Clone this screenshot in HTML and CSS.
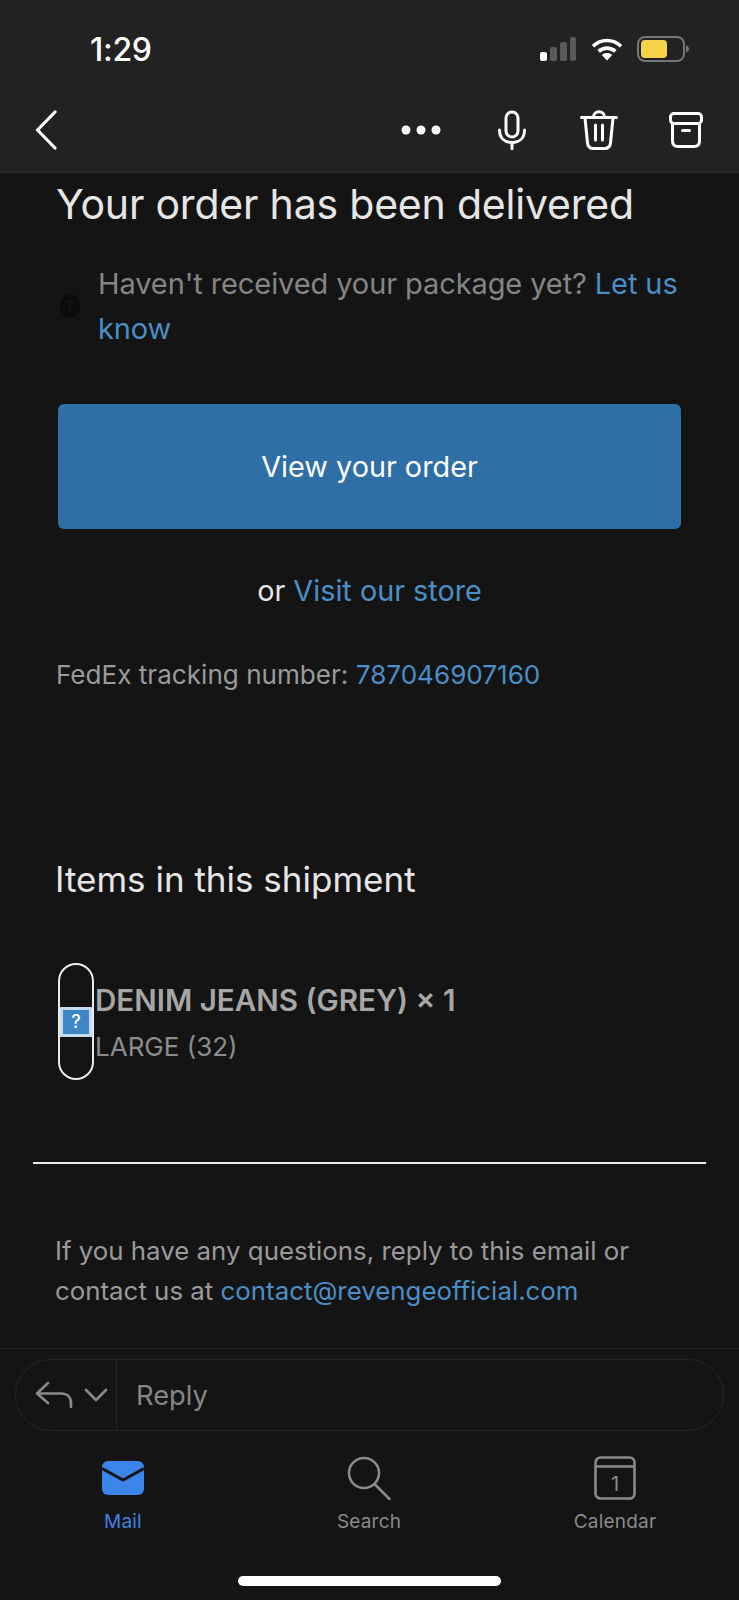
FILE: index.html
```html
<!DOCTYPE html>
<html lang="en">
<head>
<meta charset="utf-8">
<title>Your order has been delivered</title>
<link rel="stylesheet" href="styles.css">
</head>
<body>
<div class="screen">
  <header class="top">
    <div class="status">
      <span class="time">1:29</span>
      <div class="status-icons">
        <svg class="signal" width="38" height="26" viewBox="0 0 38 26">
          <rect x="1" y="16" width="7" height="9" rx="2" fill="#fff"/>
          <rect x="11" y="11" width="7" height="14" rx="2" fill="#5a5a5a"/>
          <rect x="21" y="6" width="7" height="19" rx="2" fill="#5a5a5a"/>
          <rect x="31" y="1" width="6" height="24" rx="2" fill="#5a5a5a"/>
        </svg>
        <svg class="wifi" width="32" height="24" viewBox="0 0 32 24">
          <path d="M2 9.2C10 1.6 22 1.6 30 9.2" fill="none" stroke="#fff" stroke-width="3.6"/>
          <path d="M7.6 14.4C12.6 10 19.4 10 24.4 14.4" fill="none" stroke="#fff" stroke-width="3.6"/>
          <path d="M10.8 18 16 23.6 21.2 18C18 15.4 14 15.4 10.8 18Z" fill="#fff"/>
        </svg>
        <svg class="battery" width="52" height="26" viewBox="0 0 52 26">
          <rect x="1" y="1" width="46" height="24" rx="7" fill="none" stroke="#777" stroke-width="2"/>
          <rect x="4" y="4" width="26" height="18" rx="4" fill="#f6d247"/>
          <path d="M49 9.5c2 .6 3 2 3 3.5s-1 2.900-3 3.500Z" fill="#777"/>
        </svg>
      </div>
    </div>
    <nav class="toolbar">
      <svg class="back" width="22" height="40" viewBox="0 0 22 40"><path d="M20 2 2.500 20 20 38" fill="none" stroke="#fff" stroke-width="3.200" stroke-linecap="round" stroke-linejoin="round"/></svg>
      <div class="actions">
        <svg class="more" width="40" height="10" viewBox="0 0 40 10"><circle cx="5" cy="5" r="4.500" fill="#fff"/><circle cx="20" cy="5" r="4.500" fill="#fff"/><circle cx="35" cy="5" r="4.500" fill="#fff"/></svg>
        <svg class="mic" width="30" height="40" viewBox="0 0 30 40" fill="none" stroke="#fff" stroke-width="3" stroke-linecap="round"><rect x="9" y="2" width="12" height="25" rx="6"/><path d="M2.500 20c0 8 5 12.500 12.500 12.500S27.500 28 27.500 20M15 32.500V39"/></svg>
        <svg class="trash" width="38" height="40" viewBox="0 0 38 40" fill="none" stroke="#fff" stroke-width="3" stroke-linecap="round" stroke-linejoin="round"><path d="M1.500 7.500h35M5 8l2.500 25c.3 3.500 2.500 5.500 6 5.500h11c3.500 0 5.700-2 6-5.500L33 8M13.500 7c0-7 11-7 11 0M15.500 15v15M22.500 15v15"/></svg>
        <svg class="box" width="34" height="36" viewBox="0 0 34 36" fill="none" stroke="#fff" stroke-width="3" stroke-linejoin="round" stroke-linecap="round"><rect x="1.500" y="1.500" width="31" height="10" rx="3.500"/><path d="M3.500 11.500V29c0 3.500 2 5.500 5.500 5.500h16c3.500 0 5.500-2 5.500-5.500V11.500M13.500 18.500h7"/></svg>
      </div>
    </nav>
  </header>

  <main class="mail">
    <h1 class="title">Your order has been delivered</h1>
    <div class="notice">
      <span class="notice-icon">?</span>
      <p class="notice-text">Haven't received your package yet? <a class="link">Let us</a> <a class="link">know</a></p>
    </div>
    <a class="cta">View your order</a>
    <p class="store">or <a class="link">Visit our store</a></p>
    <p class="tracking">FedEx tracking number: <a class="link">787046907160</a></p>
    <h2 class="items-head">Items in this shipment</h2>
    <div class="item">
      <div class="thumb"><span class="broken">?</span></div>
      <div class="item-text">
        <div class="item-name">DENIM JEANS (GREY) × 1</div>
        <div class="item-variant">LARGE (32)</div>
      </div>
    </div>
    <hr class="rule">
    <div class="contact">
      <p class="contact-line">If you have any questions, reply to this email or</p>
      <p class="contact-line">contact us at <a class="link">contact@revengeofficial.com</a></p>
    </div>
  </main>

  <footer class="bottom">
    <div class="reply-wrap">
      <div class="reply">
        <div class="reply-actions">
          <svg width="38" height="28" viewBox="0 0 38 28" fill="none" stroke="#8a8a8a" stroke-width="2.600" stroke-linecap="round" stroke-linejoin="round"><path d="M13 2 2 12.500 13 22M2 12.500h24c6 0 10 3.500 10 9.500v4"/></svg>
          <svg width="24" height="14" viewBox="0 0 24 14" fill="none" stroke="#8a8a8a" stroke-width="2.600" stroke-linecap="round" stroke-linejoin="round"><path d="m2 2 10 10L22 2"/></svg>
        </div>
        <span class="reply-label">Reply</span>
      </div>
    </div>
    <div class="tabs">
      <div class="tab tab-active">
        <div class="tab-icon"><svg width="44" height="36" viewBox="0 0 44 36"><rect x="1" y="1" width="42" height="34" rx="6" fill="#3a84ea"/><path d="M1 8.500 22 20 43 8.500" fill="none" stroke="#141414" stroke-width="3"/></svg></div>
        <span class="tab-label">Mail</span>
      </div>
      <div class="tab">
        <div class="tab-icon"><svg width="44" height="44" viewBox="0 0 44 44" fill="none" stroke="#8a8a8a" stroke-width="2.600" stroke-linecap="round"><circle cx="17" cy="17" r="15"/><path d="m27.500 28 15 15"/></svg></div>
        <span class="tab-label">Search</span>
      </div>
      <div class="tab">
        <div class="tab-icon"><svg width="42" height="44" viewBox="0 0 42 44" fill="none" stroke="#8a8a8a" stroke-width="2.600"><rect x="1.500" y="1.500" width="39" height="41" rx="5"/><path d="M1.500 10.500h39"/><text x="21" y="35" class="cal-num">1</text></svg></div>
        <span class="tab-label">Calendar</span>
      </div>
    </div>
    <div class="home-row"><div class="home"></div></div>
  </footer>
</div>
</body>
</html>
```
FILE: styles.css
```css
* { box-sizing: border-box; }
html, body { margin: 0; padding: 0; background: #141414; }
body { font-family: Inter, "Liberation Sans", sans-serif; }
p, h1, h2 { margin: 0; font-weight: 400; }

.screen { width: 739px; height: 1600px; display: flex; flex-direction: column; overflow: hidden; background: #141414; }

.top { height: 173px; flex: none; background: #222222; border-bottom: 1px solid #2a2a2a; }
.status { height: 90px; display: flex; justify-content: space-between; align-items: flex-start; padding: 30px 50px 0 90px; }
.time { font-size: 32px; line-height: 40px; font-weight: 500; color: #fff; letter-spacing: -0.3px; }
.status-icons { display: flex; align-items: center; gap: 14px; padding-top: 6px; }
.toolbar { display: flex; justify-content: space-between; align-items: center; padding: 0 36px 0 35px; height: 80px; }
.actions { display: flex; align-items: center; }
.more { margin-right: 56px; }
.mic { margin-right: 53px; }
.trash { margin-right: 51px; }

.mail { flex: 1; min-height: 0; padding: 0 33px; color: #e6e6e6; }
.title { font-size: 41px; line-height: 60px; letter-spacing: -0.2px; color: #e6e6e6; padding-left: 23px; margin-top: 1px; white-space: nowrap; }
.notice { display: flex; align-items: center; gap: 18px; margin: 27px 0 0 27px; }
.notice-icon { flex: none; width: 20px; height: 24px; border-radius: 50%; background: #0b0b0b; color: #1c1c1c; font-size: 14px; line-height: 24px; text-align: center; }
.notice-text { font-size: 29px; line-height: 45px; letter-spacing: -0.1px; color: #858585; width: 600px; }
.link { color: #4a8fc6; }
.cta { display: flex; align-items: center; justify-content: center; width: 623px; height: 125px; margin: 53px 0 0 25px; background: #306fa5; border-radius: 6px; color: #fff; font-size: 28.8px; }
.store { font-size: 28.8px; line-height: 40px; color: #e6e6e6; text-align: center; margin-top: 42px; }
.tracking { font-size: 26.100px; line-height: 40px; color: #9a9a9a; margin: 44px 0 0 23px; white-space: nowrap; }
.items-head { font-size: 35px; line-height: 50px; color: #e6e6e6; margin: 159px 0 0 22px; }
.item { display: flex; align-items: center; margin: 59px 0 0 25px; }
.thumb { flex: none; width: 36px; height: 117px; border: 2px solid #ececec; border-radius: 18px; display: flex; align-items: center; justify-content: center; }
.broken { display: block; width: 32px; height: 30px; flex: none; background: #3f86c8; border: 3px solid #c6dcee; color: #fff; font-size: 18px; font-weight: 500; line-height: 24px; text-align: center; }
.item-text { margin: 3px 0 0 1px; }
.item-name { font-size: 29.6px; line-height: 46px; font-weight: 600; color: #a6a6a6; white-space: nowrap; }
.item-variant { font-size: 26px; line-height: 46px; margin-top: 1px; color: #8c8c8c; white-space: nowrap; }
.rule { border: 0; height: 2px; background: #ececec; margin: 82px 0 0 0; width: 673px; }
.contact { margin: 67px 0 0 22px; }
.contact-line { font-size: 25.85px; line-height: 40px; color: #9a9a9a; white-space: nowrap; }

.bottom { flex: none; height: 252px; background: #141414; border-top: 1px solid #222; }
.reply-wrap { padding: 10px 15px 0; }
.reply { height: 72px; border: 1px solid #262626; border-radius: 36px; display: flex; align-items: center; }
.reply-actions { width: 101px; height: 100%; flex: none; display: flex; align-items: center; gap: 11px; padding-left: 19px; border-right: 1px solid #262626; }
.reply-label { font-size: 27.3px; color: #858585; margin-left: 19px; }
.tabs { display: flex; justify-content: flex-start; margin-top: 25px; }
.tab { width: 246px; height: 78px; display: flex; flex-direction: column; align-items: center; justify-content: space-between; }
.tab-icon { height: 44px; display: flex; align-items: center; }
.tab-label { font-size: 19px; line-height: 24px; letter-spacing: 0.2px; color: #8a8a8a; }
.tab-active .tab-label { color: #3f82e0; }
.cal-num { font-family: Inter, sans-serif; font-size: 20px; fill: #8a8a8a; stroke: none; text-anchor: middle; }
.home-row { display: flex; justify-content: center; margin-top: 42px; }
.home { width: 263px; height: 10px; border-radius: 5px; background: #fff; }
```
